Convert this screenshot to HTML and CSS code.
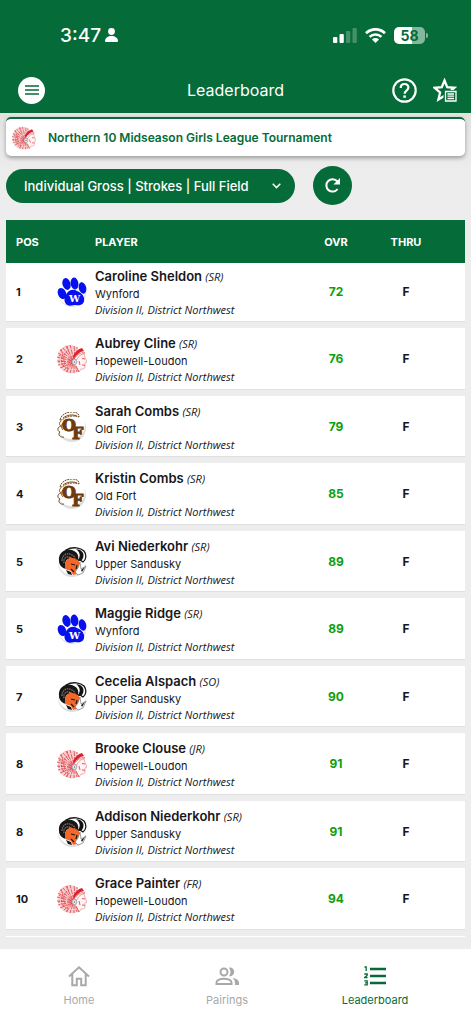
FILE: index.html
```html
<!DOCTYPE html>
<html lang="en">
<head>
<meta charset="utf-8">
<meta name="viewport" content="width=device-width, initial-scale=1">
<title>Leaderboard</title>
<link rel="stylesheet" href="styles.css">
</head>
<body>
<svg class="sprites" aria-hidden="true">
  <symbol id="paw" viewBox="0 0 30 30">
    <circle cx="15" cy="16" r="14" fill="#e3e3e6"/>
    <circle cx="14" cy="14" r="14" fill="#fff"/>
    <g fill="#0710ee">
      <ellipse cx="5" cy="16.500" rx="4" ry="5.800" transform="rotate(-24 5 16.500)"/>
      <ellipse cx="9.500" cy="7" rx="4" ry="6" transform="rotate(-16 9.500 7)"/>
      <ellipse cx="17.500" cy="6.500" rx="3.900" ry="6" transform="rotate(-8 17.500 6.500)"/>
      <ellipse cx="25.500" cy="11" rx="3.700" ry="5.800" transform="rotate(-14 25.500 11)"/>
      <path d="M10 16c3-4 7-4 10-2 3 1 6 3 7 7 1 6-3 8-8 7-4 0-7 2-10-1-3-4-1-8 1-11z"/>
    </g>
  </symbol>
  <symbol id="chief" viewBox="0 0 30 30">
    <path d="M20 3C13-1 5 1 2 8c-3 7-1 15 5 19 4 3 10 3 14 1l-3-7 5-12z" fill="#f7cfd0"/>
    <g fill="none" stroke="#dd4047" stroke-width=".8">
      <path d="M17 16L13 1M16 16L9 2M16 16L6 4M15 16L3 6M15 17L1 9M15 17L0 13M15 18L0 17M15 18L1 21M15 19L3 24M15 19L6 27M16 19L9 28M16 20L13 29M17 20L17 29M18 20L20 28M18 13L17 1M20 11L20 3" stroke-dasharray="5 1"/>
      <path d="M4 5l2 6M2 11l5 3M1 18l6-1M4 24l4-4M10 28l1-6M10 2l2 6M6 10c-3 6-2 11 3 14M10 7c-5 6-4 12 1 15" stroke-dasharray="2 1"/>
    </g>
    <path d="M16 12c2-4 5-7 9-8l2 3c-5 1-8 4-10 8z" fill="#d9232d"/>
    <path d="M17 15c3-4 6-6 10-7l1 1c-4 1-6 3-8 7z" fill="#fff" stroke="#dd4047" stroke-width=".6"/>
    <path d="M20 15c2-3 4-5 7-5 1 3 1 4 3 8l-2 1v4c0 2-2 2-4 2l-2 3-4-6z" fill="#fff4f3" stroke="#e88b8f" stroke-width=".7"/>
    <path d="M25 14.500l3 .5M25 21l3 .3M22 17l1 4M19 22l3 6" stroke="#d94b51" stroke-width=".9"/>
    <circle cx="17.500" cy="18" r="2.400" fill="#f4eeee" stroke="#9aa5ae" stroke-width=".9"/>
    <circle cx="17.500" cy="18" r=".8" fill="#66737c"/>
  </symbol>
  <symbol id="oldfort" viewBox="0 0 30 30">
    <circle cx="15" cy="16" r="14" fill="#dedede"/>
    <circle cx="14" cy="13" r="14" fill="#fff"/>
    <path d="M3 8c1-5 6-8 12-8 4 0 7 1 7 5-6-2-12-1-17 3z" fill="#fcf8ef" stroke="#6e4b27" stroke-width="1" stroke-dasharray="2 .7"/>
    <path d="M6 6c4-3 9-4 14-2M4 9c-2 1-2 4 0 5-4 1-4 5-1 6-3 3 1 6 4 5M6 11c-2 2-2 5 0 7" fill="none" stroke="#73502b" stroke-width="1"/>
  </symbol>
  <symbol id="ram" viewBox="0 0 30 30">
    <circle cx="15" cy="16" r="14" fill="#dedede"/>
    <circle cx="15" cy="14" r="14" fill="#fff"/>
    <path d="M9 3c7-4 15-2 18 1 3 4 2 9-1 11l-3-2-6 1z" fill="#fff" stroke="#171717" stroke-width="1.300"/>
    <path d="M19 2c4 3 5 7 2 11l3 1c4-4 3-9-1-11z" fill="#141414"/>
    <path d="M2 14C1 5 9 1 15 3c6 2 8 7 5 12l-5-2c-4-3-8 1-5 4l2 4-3 1C5 21 2 18 2 14z" fill="#171717"/>
    <path d="M5 14c0-6 5-9 10-6 3 1 3 4 3 6M7 16c-1-5 3-8 7-5" fill="none" stroke="#8c6e5c" stroke-width="1.300" stroke-dasharray="1.500 .8"/>
    <path d="M8 15l5-5 8 3 2 3-1 5-2 6-4 1-2-4-6-2z" fill="#f2682a"/>
    <path d="M14 17l4 1M14 22l3 3M20 18l-1 4" stroke="#29180f" stroke-width="1.200"/>
    <path d="M23 15l1 7 5-3-3 7-5 2-3-3 3-4z" fill="#fff" stroke="#777" stroke-width=".7"/>
    <path d="M9 23l2 4 4 1-1-3zM24 23l4-3-3 5z" fill="#191919"/>
  </symbol>
</svg>

<header class="top">
  <div class="status">
    <div class="status-group time">
      <span>3:47</span>
      <svg width="13" height="14" viewBox="0 0 13 14" fill="#fff" aria-hidden="true"><circle cx="6.500" cy="3.500" r="3.400"/><path d="M0 13c0-3 3-5 6.500-5S13 10 13 13q0 1-1 1H1q-1 0-1-1z"/></svg>
    </div>
    <div class="status-group">
      <svg width="24" height="15" viewBox="0 0 24 15" fill="#fff" aria-hidden="true"><rect y="9" width="4.300" height="6" rx="1"/><rect x="6.500" y="6" width="4.300" height="9" rx="1"/><g opacity=".25"><rect x="13" y="3" width="4.300" height="12" rx="1"/><rect x="19.500" width="4.300" height="15" rx="1"/></g></svg>
      <svg width="21" height="15" viewBox="0 0 21 15" aria-hidden="true"><g fill="none" stroke="#fff" stroke-width="2.700"><path d="M1 5.200a13.500 13.500 0 0 1 19 0"/><path d="M4.600 8.900a8.400 8.400 0 0 1 11.800 0"/></g><path d="M7 11.500a5 5 0 0 1 7 0L10.500 15z" fill="#fff"/></svg>
      <span class="battery">58</span>
    </div>
  </div>
  <div class="appbar">
    <button class="menu" aria-label="Menu"><svg width="14" height="10" viewBox="0 0 14 10" stroke="#056b38" stroke-width="1.700"><path d="M0 1h14M0 5h14M0 9h14"/></svg></button>
    <h1>Leaderboard</h1>
    <div class="actions">
      <button aria-label="Help"><svg width="25" height="25" viewBox="0 0 25 25" fill="none" stroke="#fff" stroke-width="2.200"><circle cx="12.500" cy="12.500" r="11.200"/><path d="M8.700 9.900c0-5.100 7.700-5.100 7.700-.4 0 3-3.800 3.300-3.800 6.300"/><path d="M12.600 17.400v2.400" stroke-width="2.500"/></svg></button>
      <button aria-label="Favorites"><svg width="24" height="24" viewBox="0 0 24 24"><path d="M11.500 2.500l2.700 6.700 7.200.6-5.500 4.700 1.700 7-6.100-3.700-6.100 3.700 1.700-7L1.600 9.800l7.200-.6z" fill="none" stroke="#fff" stroke-width="2.300"/><rect x="10.500" y="12" width="13.500" height="12" fill="#056b38"/><path d="M12.500 13.500h10.500v9.500H12.500zM14.500 16h6.500M14.500 18.200h6.500M14.500 20.500h6.500" fill="none" stroke="#fff" stroke-width="1.300"/></svg></button>
    </div>
  </div>
</header>

<main class="content">
  <a class="event" href="#event"><svg class="event-logo" aria-hidden="true"><use href="#chief"/></svg><span>Northern 10 Midseason Girls League Tournament</span></a>
  <div class="controls">
    <div class="picker">
      <select aria-label="Leaderboard view"><option>Individual Gross | Strokes | Full Field</option></select>
      <svg width="9" height="6" viewBox="0 0 9 6" fill="none" stroke="#fff" stroke-width="1.500" aria-hidden="true"><path d="M.7.8l3.800 3.800L8.300.8"/></svg>
    </div>
    <button class="refresh" aria-label="Refresh"><svg width="15" height="15" viewBox="0 0 15 15"><path d="M12.600 11a6.200 6.200 0 1 1-.3-7.600" fill="none" stroke="#fff" stroke-width="2"/><path d="M15 0v6.600H8.400z" fill="#fff"/></svg></button>
  </div>
  <table class="board">
    <thead><tr><th class="pos" scope="col">POS</th><th class="logo"></th><th scope="col">PLAYER</th><th class="score" scope="col">OVR</th><th class="thru" scope="col">THRU</th></tr></thead>
    <tbody>
      <tr><td class="pos">1</td><td class="logo"><svg viewBox="0 0 30 30"><use href="#paw"/><text class="paw-letter" x="12" y="25">W</text></svg></td><td><div class="name">Caroline Sheldon <i>(SR)</i></div><div class="school">Wynford</div><div class="division">Division II, District Northwest</div></td><td class="score">72</td><td class="thru">F</td></tr>
      <tr><td class="pos">2</td><td class="logo"><svg viewBox="0 0 30 30"><use href="#chief"/></svg></td><td><div class="name">Aubrey Cline <i>(SR)</i></div><div class="school">Hopewell-Loudon</div><div class="division">Division II, District Northwest</div></td><td class="score">76</td><td class="thru">F</td></tr>
      <tr><td class="pos">3</td><td class="logo"><svg viewBox="0 0 30 30"><use href="#oldfort"/><text class="fort-letters" x="5" y="19">O<tspan x="15" y="27">F</tspan></text></svg></td><td><div class="name">Sarah Combs <i>(SR)</i></div><div class="school">Old Fort</div><div class="division">Division II, District Northwest</div></td><td class="score">79</td><td class="thru">F</td></tr>
      <tr><td class="pos">4</td><td class="logo"><svg viewBox="0 0 30 30"><use href="#oldfort"/><text class="fort-letters" x="5" y="19">O<tspan x="15" y="27">F</tspan></text></svg></td><td><div class="name">Kristin Combs <i>(SR)</i></div><div class="school">Old Fort</div><div class="division">Division II, District Northwest</div></td><td class="score">85</td><td class="thru">F</td></tr>
      <tr><td class="pos">5</td><td class="logo"><svg viewBox="0 0 30 30"><use href="#ram"/></svg></td><td><div class="name">Avi Niederkohr <i>(SR)</i></div><div class="school">Upper Sandusky</div><div class="division">Division II, District Northwest</div></td><td class="score">89</td><td class="thru">F</td></tr>
      <tr><td class="pos">5</td><td class="logo"><svg viewBox="0 0 30 30"><use href="#paw"/><text class="paw-letter" x="12" y="25">W</text></svg></td><td><div class="name">Maggie Ridge <i>(SR)</i></div><div class="school">Wynford</div><div class="division">Division II, District Northwest</div></td><td class="score">89</td><td class="thru">F</td></tr>
      <tr><td class="pos">7</td><td class="logo"><svg viewBox="0 0 30 30"><use href="#ram"/></svg></td><td><div class="name">Cecelia Alspach <i>(SO)</i></div><div class="school">Upper Sandusky</div><div class="division">Division II, District Northwest</div></td><td class="score">90</td><td class="thru">F</td></tr>
      <tr><td class="pos">8</td><td class="logo"><svg viewBox="0 0 30 30"><use href="#chief"/></svg></td><td><div class="name">Brooke Clouse <i>(JR)</i></div><div class="school">Hopewell-Loudon</div><div class="division">Division II, District Northwest</div></td><td class="score">91</td><td class="thru">F</td></tr>
      <tr><td class="pos">8</td><td class="logo"><svg viewBox="0 0 30 30"><use href="#ram"/></svg></td><td><div class="name">Addison Niederkohr <i>(SR)</i></div><div class="school">Upper Sandusky</div><div class="division">Division II, District Northwest</div></td><td class="score">91</td><td class="thru">F</td></tr>
      <tr><td class="pos">10</td><td class="logo"><svg viewBox="0 0 30 30"><use href="#chief"/></svg></td><td><div class="name">Grace Painter <i>(FR)</i></div><div class="school">Hopewell-Loudon</div><div class="division">Division II, District Northwest</div></td><td class="score">94</td><td class="thru">F</td></tr>
    </tbody>
  </table>
  <div class="next-edge"></div>
</main>

<nav class="tabs">
  <a href="#home"><svg width="22" height="22" viewBox="0 0 22 22" fill="none" stroke="currentColor" stroke-width="2"><path d="M1 11.500L11 2.300l10 9.200M4.300 9v11.300h4.500v-6.500h4.400v6.500h4.500V9"/></svg><span>Home</span></a>
  <a href="#pairings"><svg width="24" height="22" viewBox="0 0 24 22" fill="currentColor"><g fill="none" stroke="currentColor" stroke-width="2"><circle cx="9" cy="7" r="3.500"/><path d="M1.500 19v-1.500C1.500 15 5.500 13.700 9 13.700s7.500 1.300 7.500 3.800V19z"/></g><path d="M14 2.700c5-1.200 7.200 5.500 3 8q-1.600.9-3 .5 3-3.800 0-8.500zM17.500 13c3.500.5 6.500 2 6.500 4.700V20h-4v-2.500q0-2.500-2.500-4.500z"/></svg><span>Pairings</span></a>
  <a href="#leaderboard" class="active" aria-current="page"><svg width="22" height="20" viewBox="0 0 22 20" fill="none" stroke="currentColor"><path d="M6 3h16M6 10h16M6 17h16" stroke-width="2.400"/><path d="M.5 1h1.700v4M.3 8h2.900v1.200L.7 11.500h2.800M.3 14.800h2.900v4.100H.3M1 16.900h2" stroke-width="1.300"/></svg><span>Leaderboard</span></a>
</nav>
</body>
</html>
```
FILE: styles.css
```css
:root { --green: #056b38; --page: #ededed; }
* { box-sizing: border-box; }
body {
  margin: 0;
  min-height: 100vh;
  display: flex;
  flex-direction: column;
  background: var(--page);
  color: #17171b;
  font-family: Inter, "Liberation Sans", sans-serif;
}
button { border: 0; padding: 0; background: none; display: grid; place-items: center; }
a { color: inherit; text-decoration: none; }
svg { display: block; }
.sprites { position: absolute; width: 0; height: 0; }
.paw-letter { font: 700 10px "DejaVu Serif", serif; fill: #fff; }
.fort-letters { font: 700 16px "DejaVu Serif", serif; fill: #6f3b0c; stroke: #6f3b0c; stroke-width: 1px; }

.top { background: var(--green); color: #fff; }
.status { height: 68px; padding: 2px 46px 0 60px; display: flex; align-items: center; justify-content: space-between; }
.status-group { display: flex; align-items: center; gap: 8px; }
.time { gap: 4px; font-size: 19px; font-weight: 500; }
.battery {
  position: relative;
  width: 31px;
  height: 17px;
  border-radius: 5px;
  background: linear-gradient(90deg, #fff 58%, #85b79d 58%);
  color: var(--green);
  font-size: 14px;
  font-weight: 700;
  line-height: 17px;
  text-align: center;
}
.battery::after { content: ""; position: absolute; left: 32px; top: 6px; width: 2px; height: 5px; border-radius: 0 2px 2px 0; background: #85b79d; }
.appbar { height: 45px; padding: 0 14px 1px; display: grid; grid-template-columns: 1fr auto 1fr; align-items: center; }
.menu { width: 27px; height: 27px; margin-left: 4px; border-radius: 50%; background: #fff; }
h1 { margin: 0; font-size: 16px; font-weight: 400; line-height: 20px; }
.actions { display: flex; justify-content: flex-end; align-items: center; gap: 16px; }

.content { flex: 1; padding: 4px 6px 12px; background: linear-gradient(#e2e2e2, var(--page) 60px); }
.event {
  height: 39px;
  padding: 0 6px;
  display: flex;
  align-items: center;
  gap: 12px;
  border-top: 2px solid var(--green);
  border-radius: 5px;
  background: #fff;
  box-shadow: 0 2px 4px rgba(0, 0, 0, .35);
  color: var(--green);
  font-size: 12px;
  font-weight: 600;
}
.event-logo { width: 24px; height: 24px; }
.controls { margin: 10px 0 15px; display: flex; align-items: center; gap: 18px; }
.picker { display: grid; align-items: center; width: 63%; }
.picker > * { grid-area: 1 / 1; }
.picker svg { justify-self: end; margin-right: 14px; pointer-events: none; }
select {
  appearance: none;
  width: 100%;
  height: 34px;
  padding: 0 30px 0 18px;
  border: 0;
  border-radius: 17px;
  background: var(--green);
  color: #fff;
  font-family: inherit;
  font-size: 13px;
  font-weight: 500;
}
.refresh { width: 39px; height: 39px; border-radius: 50%; background: var(--green); }

.board { width: 100%; table-layout: fixed; border-collapse: separate; border-spacing: 0; }
th { height: 43px; padding: 0; background: var(--green); color: #fff; font-size: 11px; font-weight: 700; text-align: left; }
td { padding: 6px 0; border-bottom: 6px solid var(--page); background: #fff; background-clip: padding-box; box-shadow: inset 0 -1px #e0e0e0; }
tr:nth-child(even) td { padding-bottom: 7px; }
tbody tr:first-child td { padding-top: 4px; }
.board .pos { width: 51px; padding-left: 10px; font-size: 11px; font-weight: 700; }
.board .logo { width: 38px; }
.logo svg { width: 30px; height: 30px; overflow: visible; }
.board .score, .board .thru { width: 70px; text-align: center; }
.board .thru { width: 94px; padding-right: 24px; }
td.score, td.thru { font-size: 12px; font-weight: 700; }
td.score { color: #0ba00b; }
.name { height: 18px; font-size: 13px; font-weight: 600; line-height: 18px; }
.name i { font-family: "Open Sans", sans-serif; font-size: 11px; font-weight: 400; line-height: 1; }
.school { font-size: 11px; line-height: 18px; }
.division { font-family: "Open Sans", sans-serif; font-size: 11px; font-style: italic; line-height: 13px; }
.next-edge { height: 1px; background: #fff; }

.tabs { height: 75px; padding: 15px 22px 0 5px; display: grid; grid-template-columns: repeat(3, 1fr); background: #fff; color: #a9a9a9; }
.tabs a { display: grid; grid-template-rows: 24px 16px; gap: 4px; place-items: center; align-content: start; font-size: 11px; line-height: 16px; }
.tabs .active { color: var(--green); }
```
